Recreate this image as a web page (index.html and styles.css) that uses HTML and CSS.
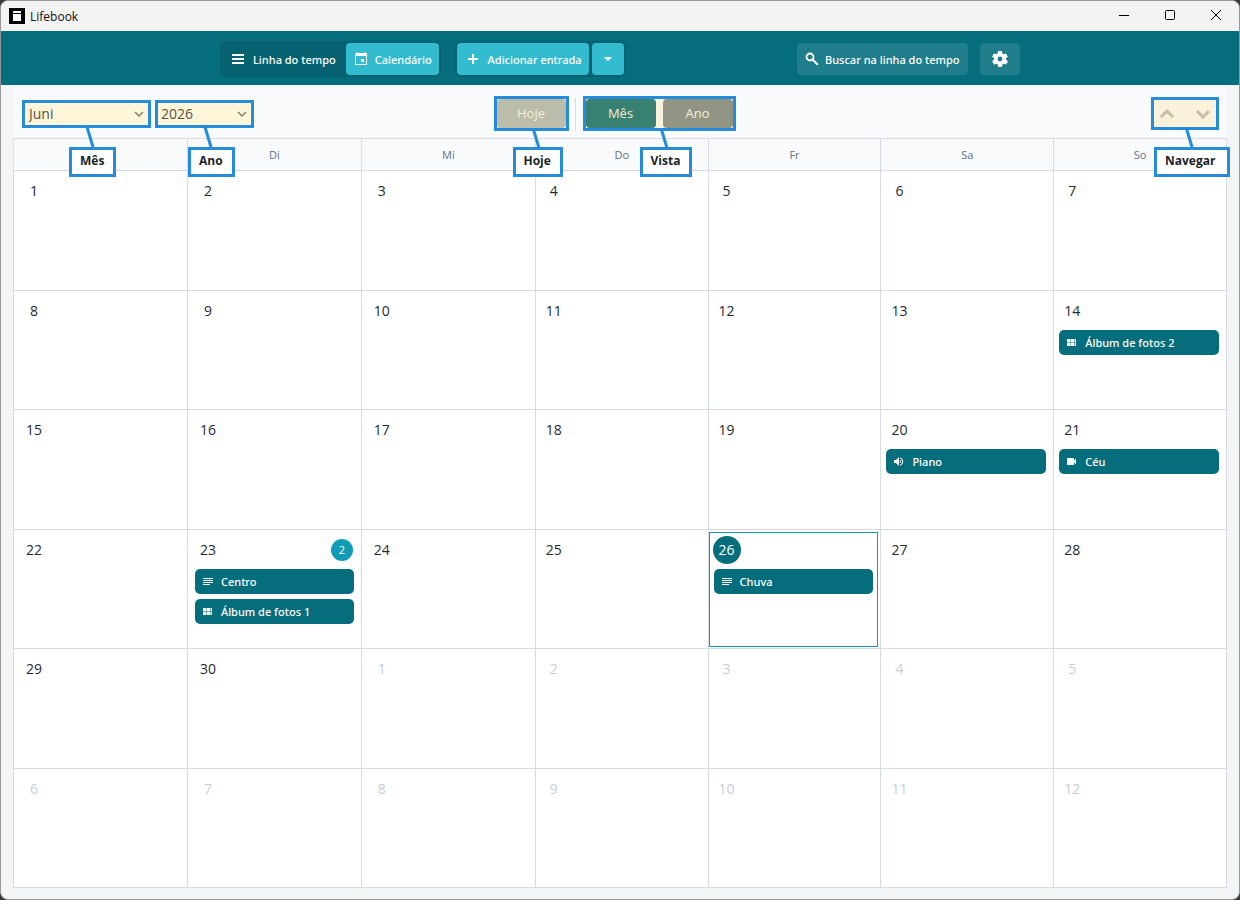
FILE: index.html
```html
<!DOCTYPE html>
<html lang="pt">

<head>
    <meta charset="UTF-8">
    <meta name="viewport" content="width=device-width, initial-scale=1.0">
    <title>Lifebook</title>
    <link rel="stylesheet" href="styles.css">
</head>

<body>
    <!-- icons shared by the calendar entries -->
    <svg class="sprite" aria-hidden="true">
        <symbol id="icon-text" viewBox="0 0 10 10">
            <path d="M0 1h10v1H0zM0 3h10v1H0zM0 5h10v1H0zM0 7h7v1H0z" />
        </symbol>
        <symbol id="icon-album" viewBox="0 0 10 10">
            <path d="M0 1h3.500v3.200H0zM4 1h3v3.200H4zM7.500 1H9v3.200H7.500zM0 4.800h3.500V8H0zM4 4.800h3V8H4zM7.500 4.800H9V8H7.500z" />
        </symbol>
        <symbol id="icon-sound" viewBox="0 0 10 10">
            <path d="M0 3h2l3-3v9L2 6H0z" />
            <path d="M6 3q1.500 1.500 0 3M6 .8a3.900 3.900 0 0 1 0 7.500" fill="none" stroke="#fff" />
        </symbol>
        <symbol id="icon-video" viewBox="0 0 10 10">
            <path d="M0 1h7v2.500l2-2v6l-2-2V8H0z" />
        </symbol>
    </svg>

    <div class="window">
        <div class="titlebar">
            <svg class="logo" viewBox="0 0 16 16">
                <path d="M0 0h16v16H0z" />
                <path d="M4 3h8v2H4zM4 6h8v7H4z" fill="#fff" />
            </svg>
            <span>Lifebook</span>
            <div class="window-buttons">
                <button aria-label="Minimizar"><svg viewBox="0 0 12 12"><path d="M1 5.500h10" /></svg></button>
                <button aria-label="Maximizar"><svg viewBox="0 0 12 12"><rect x="1.500" y=".5" width="9" height="9" rx="1" /></svg></button>
                <button aria-label="Fechar"><svg viewBox="0 0 12 12"><path d="M1 0l10 10M11 0L1 10" /></svg></button>
            </div>
        </div>

        <header class="header">
            <div class="header-inner">
                <div class="group tabs">
                    <button class="tab">
                        <svg class="icon" viewBox="0 0 14 14"><path d="M1 2h12v2H1zM1 6h12v2H1zM1 10h12v2H1z" /></svg>
                        Linha do tempo
                    </button>
                    <button class="tab active">
                        <svg class="icon" viewBox="0 0 14 14"><path fill-rule="evenodd" d="M1 1h2V0h1v1h6V0h1v1h2v12H1zM2 4v8h10V4zM7 7h3v3H7z" /></svg>
                        Calendário
                    </button>
                </div>
                <div class="group add">
                    <button class="add-button">
                        <svg class="icon" viewBox="0 0 14 14"><path d="M6 2h2v4h4v2H8v4H6V8H2V6h4z" /></svg>
                        Adicionar entrada
                    </button>
                    <button class="add-more" aria-label="Mais opções">
                        <svg viewBox="0 0 8 4"><path d="M0 0h8L4 4z" /></svg>
                    </button>
                </div>
                <label class="search">
                    <svg class="icon" viewBox="0 0 14 14">
                        <circle cx="5" cy="5" r="3.500" fill="none" stroke="#fff" stroke-width="1.800" />
                        <path d="M7.500 7.500l5.300 5.300" stroke="#fff" stroke-width="2" />
                    </svg>
                    <input type="text" placeholder="Buscar na linha do tempo" aria-label="Buscar na linha do tempo">
                </label>
                <button class="settings" aria-label="Configurações">
                    <svg viewBox="2 2 20 20"><path d="M19.400 13c0-.3.100-.6.100-1s0-.7-.1-1l2.100-1.600c.2-.2.200-.4.100-.6l-2-3.500c-.1-.2-.4-.3-.6-.2l-2.500 1c-.5-.4-1.100-.7-1.700-1l-.4-2.600c0-.3-.2-.5-.4-.5h-4c-.3 0-.5.200-.5.500l-.4 2.600c-.6.300-1.200.6-1.700 1l-2.500-1c-.2-.1-.5 0-.6.200l-2 3.500c-.1.200-.1.500.1.600L4.600 11c0 .3-.1.700-.1 1s0 .7.100 1l-2.100 1.600c-.2.200-.2.400-.1.600l2 3.500c.1.200.4.300.6.200l2.500-1c.5.400 1.100.7 1.700 1l.4 2.600c0 .3.200.5.500.5h4c.2 0 .4-.2.500-.5l.4-2.600c.6-.3 1.200-.6 1.700-1l2.500 1c.2.100.5 0 .6-.2l2-3.500c.1-.2.100-.5-.1-.6zM12 15a3 3 0 1 1 0-6 3 3 0 0 1 0 6z" /></svg>
                </button>
            </div>
        </header>

        <main class="content">
            <div class="toolbar">
                <div class="selects">
                    <div class="callout month">
                        <select aria-label="Mês">
                            <option>Juni</option>
                        </select>
                        <svg class="chevron" viewBox="0 0 10 6"><path d="M1 1l4 4 4-4" /></svg>
                        <svg class="pointer" viewBox="0 0 12 20"><path d="M2 0l6 20" /></svg>
                        <span class="callout-label">Mês</span>
                    </div>
                    <div class="callout year">
                        <select aria-label="Ano">
                            <option>2026</option>
                        </select>
                        <svg class="chevron" viewBox="0 0 10 6"><path d="M1 1l4 4 4-4" /></svg>
                        <svg class="pointer" viewBox="0 0 12 20"><path d="M2 0l6 20" /></svg>
                        <span class="callout-label">Ano</span>
                    </div>
                </div>

                <div class="views">
                    <div class="callout today">
                        <button class="view-button light">Hoje</button>
                        <svg class="pointer" viewBox="0 0 12 20"><path d="M2 0l6 20" /></svg>
                        <span class="callout-label">Hoje</span>
                    </div>
                    <div class="divider"></div>
                    <div class="callout view">
                        <button class="view-button selected">Mês</button>
                        <button class="view-button">Ano</button>
                        <svg class="pointer" viewBox="0 0 12 20"><path d="M2 0l6 20" /></svg>
                        <span class="callout-label">Vista</span>
                    </div>
                </div>

                <div class="callout navigate">
                    <button class="arrow" aria-label="Anterior"><svg viewBox="0 0 16 10"><path d="M2 8l6-6 6 6" /></svg></button>
                    <button class="arrow" aria-label="Próximo"><svg viewBox="0 0 16 10"><path d="M2 2l6 6 6-6" /></svg></button>
                    <svg class="pointer" viewBox="0 0 12 20"><path d="M2 0l6 20" /></svg>
                    <span class="callout-label">Navegar</span>
                </div>
            </div>

            <table class="calendar">
                <thead>
                    <tr>
                        <th aria-label="Montag"></th>
                        <th>Di</th>
                        <th>Mi</th>
                        <th>Do</th>
                        <th>Fr</th>
                        <th>Sa</th>
                        <th>So</th>
                    </tr>
                </thead>
                <tbody>
                    <tr>
                        <td><div class="day"><span class="number">1</span></div></td>
                        <td><div class="day"><span class="number">2</span></div></td>
                        <td><div class="day"><span class="number">3</span></div></td>
                        <td><div class="day"><span class="number">4</span></div></td>
                        <td><div class="day"><span class="number">5</span></div></td>
                        <td><div class="day"><span class="number">6</span></div></td>
                        <td><div class="day"><span class="number">7</span></div></td>
                    </tr>
                    <tr>
                        <td><div class="day"><span class="number">8</span></div></td>
                        <td><div class="day"><span class="number">9</span></div></td>
                        <td><div class="day"><span class="number">10</span></div></td>
                        <td><div class="day"><span class="number">11</span></div></td>
                        <td><div class="day"><span class="number">12</span></div></td>
                        <td><div class="day"><span class="number">13</span></div></td>
                        <td>
                            <div class="day">
                                <span class="number">14</span>
                                <a href="#" class="entry"><svg><use href="#icon-album" /></svg>Álbum de fotos 2</a>
                            </div>
                        </td>
                    </tr>
                    <tr>
                        <td><div class="day"><span class="number">15</span></div></td>
                        <td><div class="day"><span class="number">16</span></div></td>
                        <td><div class="day"><span class="number">17</span></div></td>
                        <td><div class="day"><span class="number">18</span></div></td>
                        <td><div class="day"><span class="number">19</span></div></td>
                        <td>
                            <div class="day">
                                <span class="number">20</span>
                                <a href="#" class="entry"><svg><use href="#icon-sound" /></svg>Piano</a>
                            </div>
                        </td>
                        <td>
                            <div class="day">
                                <span class="number">21</span>
                                <a href="#" class="entry"><svg><use href="#icon-video" /></svg>Céu</a>
                            </div>
                        </td>
                    </tr>
                    <tr>
                        <td><div class="day"><span class="number">22</span></div></td>
                        <td>
                            <div class="day">
                                <div class="day-top">
                                    <span class="number">23</span>
                                    <span class="count">2</span>
                                </div>
                                <a href="#" class="entry"><svg><use href="#icon-text" /></svg>Centro</a>
                                <a href="#" class="entry"><svg><use href="#icon-album" /></svg>Álbum de fotos 1</a>
                            </div>
                        </td>
                        <td><div class="day"><span class="number">24</span></div></td>
                        <td><div class="day"><span class="number">25</span></div></td>
                        <td>
                            <div class="day current">
                                <span class="number">26</span>
                                <a href="#" class="entry"><svg><use href="#icon-text" /></svg>Chuva</a>
                            </div>
                        </td>
                        <td><div class="day"><span class="number">27</span></div></td>
                        <td><div class="day"><span class="number">28</span></div></td>
                    </tr>
                    <tr>
                        <td><div class="day"><span class="number">29</span></div></td>
                        <td><div class="day"><span class="number">30</span></div></td>
                        <td><div class="day other"><span class="number">1</span></div></td>
                        <td><div class="day other"><span class="number">2</span></div></td>
                        <td><div class="day other"><span class="number">3</span></div></td>
                        <td><div class="day other"><span class="number">4</span></div></td>
                        <td><div class="day other"><span class="number">5</span></div></td>
                    </tr>
                    <tr>
                        <td><div class="day other"><span class="number">6</span></div></td>
                        <td><div class="day other"><span class="number">7</span></div></td>
                        <td><div class="day other"><span class="number">8</span></div></td>
                        <td><div class="day other"><span class="number">9</span></div></td>
                        <td><div class="day other"><span class="number">10</span></div></td>
                        <td><div class="day other"><span class="number">11</span></div></td>
                        <td><div class="day other"><span class="number">12</span></div></td>
                    </tr>
                </tbody>
            </table>
        </main>
    </div>
</body>

</html>
```
FILE: styles.css
```css
* {
    box-sizing: border-box;
}

body {
    margin: 0;
    background: #3c3c40;
    color: #1f2933;
    font-family: "Open Sans", "Noto Sans", sans-serif;
    font-size: 12px;
}

button,
input,
select {
    margin: 0;
    padding: 0;
    border: 0;
    background: none;
    color: inherit;
    font: inherit;
}

svg {
    display: block;
    flex: none;
}

.sprite {
    display: none;
}

.window {
    display: flex;
    flex-direction: column;
    min-height: 100vh;
    border: 1px solid #97979a;
    border-radius: 8px;
    background: #f3f4f6;
    overflow: hidden;
}

/* title bar */
.titlebar {
    display: flex;
    align-items: center;
    height: 30px;
    padding-left: 8px;
    gap: 5px;
    background: #f3f3f3;
    color: #111;
}

.logo {
    width: 16px;
    height: 16px;
}

.window-buttons {
    display: flex;
    margin-left: auto;
}

.window-buttons button {
    display: flex;
    align-items: center;
    justify-content: center;
    width: 46px;
    height: 28px;
}

.window-buttons svg {
    width: 12px;
    height: 12px;
    fill: none;
    stroke: #000;
}

/* header */
.header {
    display: flex;
    justify-content: center;
    padding: 10px 0 8px;
    background: #066d7d;
    color: #fff;
    font-family: "Noto Sans", "Open Sans", sans-serif;
    font-size: 11px;
    font-weight: 500;
}

.header-inner {
    display: flex;
    align-items: center;
    width: 800px;
}

.header svg {
    fill: #fff;
}

.icon {
    width: 14px;
    height: 14px;
}

.group {
    display: flex;
    padding: 2px;
    border-radius: 6px;
    background: #066270;
}

.tabs {
    margin-right: 14px;
}

.tab,
.add-button {
    display: flex;
    align-items: center;
    height: 32px;
    padding: 0 7px 0 8px;
    gap: 7px;
    border-radius: 4px;
    white-space: nowrap;
}

.tab:first-child {
    padding: 0 10px 0 9px;
    gap: 8px;
}

.add-button {
    padding-left: 9px;
    gap: 8px;
}

.tab.active,
.add-button,
.add-more {
    background: #33bbcf;
}

.add {
    gap: 3px;
}

.add-more {
    display: flex;
    align-items: center;
    justify-content: center;
    width: 32px;
    border-radius: 4px;
}

.add-more svg {
    width: 8px;
    height: 4px;
}

.search {
    display: flex;
    align-items: center;
    width: 171px;
    height: 32px;
    margin-left: auto;
    padding: 0 4px 0 8px;
    gap: 6px;
    border-radius: 4px;
    background: #207d8b;
}

.search input {
    flex: 1;
    min-width: 0;
    outline: none;
}

.search input::placeholder {
    color: #fff;
    opacity: 1;
}

.settings {
    display: flex;
    align-items: center;
    justify-content: center;
    width: 40px;
    height: 32px;
    margin-left: 12px;
    border-radius: 4px;
    background: #207d8b;
}

.settings svg {
    width: 16px;
    height: 16px;
}

/* toolbar */
.content {
    flex: 1;
    padding: 2px 12px 10px;
}

.toolbar {
    display: grid;
    grid-template-columns: 1fr auto 1fr;
    align-items: center;
    height: 51px;
    padding: 2px 8px 0 9px;
    background: #f9fafc;
}

.selects {
    display: flex;
    gap: 4px;
}

.views {
    display: flex;
    align-items: center;
    gap: 6px;
    margin-right: 12px;
}

.divider {
    width: 1px;
    height: 32px;
    margin-right: 1px;
    background: #d5dae3;
}

/* framed controls with an explaining label */
.callout {
    position: relative;
    display: flex;
    border: 3px solid #268bd8;
    background: #f9f1d9;
}

.callout-label {
    position: absolute;
    z-index: 2;
    top: calc(100% + 19px);
    left: 44px;
    padding: 2px 9px 4px 8px;
    border: 3px solid #268bd8;
    background: #fff;
    color: #1b1f26;
    font-weight: bold;
    line-height: 18px;
    white-space: nowrap;
}

.pointer {
    position: absolute;
    z-index: 1;
    top: 100%;
    left: 60px;
    width: 12px;
    height: 20px;
    fill: none;
    stroke: #268bd8;
    stroke-width: 3;
}

.month {
    width: 129px;
}

.year {
    width: 99px;
}

.year .callout-label {
    left: 30px;
}

.year .pointer {
    left: 45px;
}

.month,
.year {
    align-items: center;
    height: 28px;
    background: #fff6da;
}

.month .callout-label,
.year .callout-label {
    top: calc(100% + 22px);
}

.month .pointer,
.year .pointer {
    height: 24px;
}

.callout select {
    width: 100%;
    height: 22px;
    padding: 0 20px 0 4px;
    appearance: none;
    color: #54513f;
    font-size: 14px;
}

.year select {
    padding-left: 3px;
}

.chevron {
    position: absolute;
    right: 4px;
    width: 10px;
    height: 6px;
    fill: none;
    stroke: #85816d;
    stroke-width: 1.5;
    pointer-events: none;
}

.today .callout-label {
    left: 16px;
}

.today .pointer {
    left: 34px;
}

.view {
    gap: 7px;
}

.view .callout-label {
    left: 54px;
}

.view .pointer {
    left: 73px;
}

.view-button {
    width: 70px;
    height: 29px;
    padding-bottom: 2px;
    border-radius: 4px;
    background: #939584;
    color: #f4efd8;
    font-size: 13px;
}

.view-button.light {
    width: 69px;
    background: #bbbdaa;
}

.view-button.selected {
    background: #388071;
}

.navigate {
    justify-self: end;
    justify-content: space-between;
    width: 68px;
    height: 33px;
}

.navigate .callout-label {
    top: calc(100% + 20px);
    left: 0;
    padding-right: 12px;
}

.navigate .pointer {
    left: 30px;
}

.arrow {
    display: flex;
    align-items: center;
    justify-content: center;
    width: 26px;
}

.arrow svg {
    width: 16px;
    height: 10px;
    fill: none;
    stroke: #c7c0a4;
    stroke-width: 3;
}

/* calendar */
.calendar {
    width: 100%;
    table-layout: fixed;
    border-collapse: collapse;
    background: #fff;
}

.calendar th,
.calendar td {
    border: 1px solid #d5dae3;
}

.calendar th {
    height: 32px;
    padding: 0;
    background: #f9fafc;
    color: #64708a;
    font-size: 11px;
    font-weight: normal;
}

.calendar th:nth-child(-n+3) {
    width: 14.34%;
}

.calendar td {
    height: calc((100vh - 183px) / 6);
    padding: 2px 2px 1px 0;
    vertical-align: top;
}

.calendar td:nth-child(-n+3) {
    padding-left: 2px;
}

.day {
    height: 100%;
    padding: 3px;
    border: 1px solid transparent;
}

.day.current {
    border-color: #109cb0;
}

.day-top {
    display: flex;
    align-items: center;
    justify-content: space-between;
    padding-right: 2px;
}

.number {
    display: block;
    width: 28px;
    height: 28px;
    border-radius: 50%;
    font-size: 14px;
    line-height: 28px;
    text-align: center;
}

.current .number {
    background: #066d7d;
    color: #fff;
}

.other .number {
    color: #c5ced8;
}

.count {
    width: 22px;
    height: 22px;
    border-radius: 50%;
    background: #109cb7;
    color: #fff;
    font-size: 11px;
    font-weight: 500;
    line-height: 22px;
    text-align: center;
}

.entry {
    display: flex;
    align-items: center;
    height: 25px;
    margin: 5px 1px 0;
    padding: 0 8px;
    gap: 8px;
    border-radius: 5px;
    background: #066d7d;
    color: #fff;
    font-family: "Noto Sans", "Open Sans", sans-serif;
    font-size: 11px;
    font-weight: 500;
    text-decoration: none;
}

.entry svg {
    width: 10px;
    height: 10px;
    margin-top: 1px;
    fill: #fff;
}
```
